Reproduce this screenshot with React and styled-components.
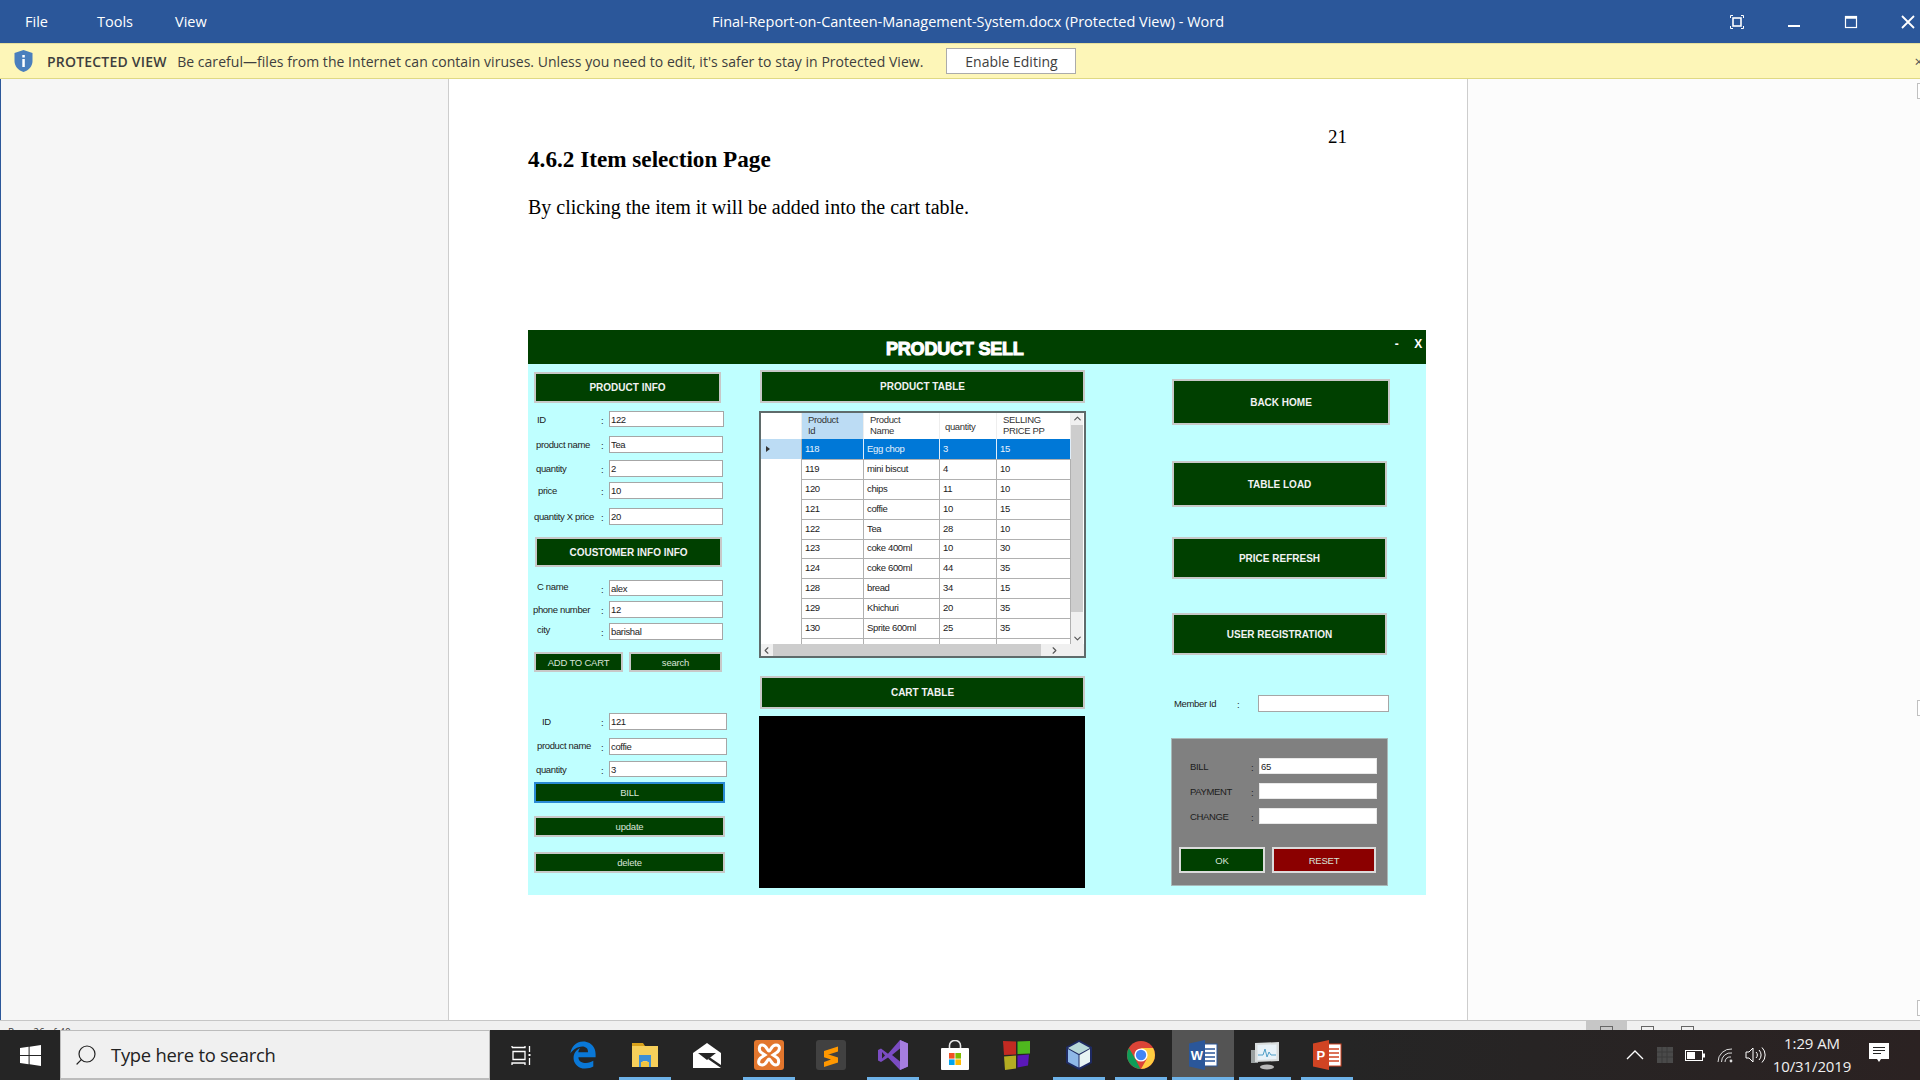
import React from 'react'
import styled, { createGlobalStyle } from 'styled-components'
import { ChevronUp, ChevronDown, ChevronLeft, ChevronRight, Search } from 'lucide-react'
import { FaEdgeLegacy } from 'react-icons/fa6'

const GlobalStyle = createGlobalStyle`
  html, body { margin: 0; padding: 0; overflow: hidden; background: #fff; }
  * { box-sizing: border-box; }
`

const UI_FONT = `"Open Sans", "Noto Sans", sans-serif`
const FORM_FONT = `"Liberation Sans", Arial, sans-serif`

const Screen = styled.div`
  width: 1920px;
  height: 1080px;
  display: flex;
  flex-direction: column;
  overflow: hidden;
`

/* word chrome */
const TitleBar = styled.div`
  height: 43px;
  flex: none;
  background: #2b579a;
  color: #fff;
  display: grid;
  grid-template-columns: 712px 1fr auto;
  align-items: center;
  font: 14.5px ${UI_FONT};
`
const Menu = styled.div`
  display: grid;
  grid-template-columns: 72px 78px auto;
  padding-left: 25px;
`
const DocTitle = styled.div`
  white-space: nowrap;
`
const WinControls = styled.div`
  display: flex;
  gap: 33px;
  align-items: center;
`
const WinIcon = styled.svg`
  width: 24px;
  height: 24px;
  display: block;
`
const ProtectedBar = styled.div`
  height: 36px;
  flex: none;
  background: #fdf6b8;
  border-top: 1px solid #e6df9c;
  border-bottom: 1px solid #dfd984;
  color: #3e3e3e;
  display: flex;
  align-items: center;
  padding-left: 14px;
  font: 14px ${UI_FONT};
  position: relative;
`
const ShieldIcon = styled.svg`
  width: 19px;
  height: 22px;
  margin-right: 14px;
  flex: none;
`
const WarnTitle = styled.span`
  font-weight: 600;
  margin-right: 10.5px;
  letter-spacing: 0.2px;
`
const WarnText = styled.span`
  letter-spacing: 0.04px;
`
const EnableButton = styled.div`
  width: 130px;
  height: 26px;
  margin-left: 23px;
  background: #fff;
  border: 1px solid #ababab;
  display: flex;
  align-items: center;
  justify-content: center;
  font-size: 14px;
`
const BarClose = styled.span`
  position: absolute;
  right: -3px;
  top: 7px;
  font-size: 15px;
  color: #555;
`

const Workspace = styled.div`
  flex: 1;
  min-height: 0;
  display: flex;
`
const LeftGutter = styled.div`
  width: 448px;
  flex: none;
  background: #f6f6f6;
  border-left: 1px solid #2b579a;
`
const RightGutter = styled.div`
  flex: 1;
  background: #fcfcfc;
  position: relative;
`
const ScrollMark = styled.div`
  position: absolute;
  right: 0;
  top: ${p => p.$top}px;
  width: 3px;
  height: 16px;
  border: 1px solid #c0c0c0;
  border-right: 0;
  background: #fff;
`
const Page = styled.div`
  width: 1020px;
  flex: none;
  background: #fff;
  border-left: 1px solid #cdcdcd;
  border-right: 1px solid #cdcdcd;
  padding: 47px 0 0 79px;
  font-family: "Liberation Serif", "Times New Roman", serif;
  color: #000;
`
const PageNumber = styled.div`
  font-size: 19px;
  line-height: 22px;
  margin-left: 800px;
`
const Heading = styled.h2`
  margin: -2px 0 0;
  font-size: 23.2px;
  line-height: 26px;
  font-weight: 700;
`
const BodyText = styled.p`
  margin: 22px 0 0;
  font-size: 20px;
  line-height: 26px;
`

/* the pasted winforms window */
const Form = styled.div`
  width: 898px;
  height: 565px;
  margin-top: 110px;
  background: #bfffff;
  font: 9.5px ${FORM_FONT};
  letter-spacing: -0.35px;
  color: #222;
  display: flex;
  flex-direction: column;
`
const FormHeader = styled.div`
  height: 34px;
  flex: none;
  background: #004000;
  color: #fff;
  display: flex;
  align-items: center;
  padding-left: 358px;
`
const FormTitle = styled.div`
  font: 700 18px ${FORM_FONT};
  letter-spacing: -0.2px;
  -webkit-text-stroke: 1.1px #fff;
  width: 137px;
  white-space: nowrap;
  margin-top: 4px;
`
const FormControls = styled.div`
  margin-left: auto;
  margin-right: 4px;
  margin-top: -7px;
  display: flex;
  gap: 16px;
  font: 700 12px ${FORM_FONT};
`
const FormBody = styled.div`
  flex: 1;
  display: flex;
  padding-left: 5px;
`
const Column = styled.div`
  width: ${p => p.$w}px;
  flex: none;
  display: flex;
  flex-direction: column;
`
const FormButton = styled.div`
  width: ${p => p.$w}px;
  height: ${p => p.$h}px;
  margin-top: ${p => p.$top || 0}px;
  margin-left: ${p => p.$left || 0}px;
  flex: none;
  background: ${p => p.$bg || '#004000'};
  border: 2px solid ${p => (p.$focus ? '#2a8ad4' : p.$light ? '#dcdcdc' : '#c8c8c8')};
  color: ${p => (p.$bold ? '#f2f2f2' : '#d8e4d8')};
  font-weight: ${p => (p.$bold ? 700 : 400)};
  font-size: ${p => (p.$bold ? 10 : 9.5)}px;
  letter-spacing: ${p => (p.$bold ? 0 : -0.2)}px;
  display: flex;
  align-items: center;
  justify-content: center;
  white-space: nowrap;
`
const ButtonRow = styled.div`
  display: flex;
  gap: ${p => p.$gap}px;
  margin-top: ${p => p.$top || 0}px;
  margin-left: ${p => p.$left || 0}px;
`
const FieldRow = styled.div`
  display: flex;
  align-items: center;
  margin-top: ${p => p.$top}px;
  margin-left: ${p => p.$left || 0}px;
`
const FieldLabel = styled.div`
  width: ${p => p.$w || 68}px;
  padding-left: ${p => p.$x || 0}px;
  margin-top: ${p => p.$dy || 0}px;
  white-space: nowrap;
  color: ${p => p.$c || '#222'};
`
const Colon = styled.div`
  width: ${p => p.$w || 8}px;
  margin-top: 2px;
  color: ${p => p.$c || '#222'};
`
const TextBox = styled.input`
  width: ${p => p.$w}px;
  height: ${p => p.$h}px;
  flex: none;
  margin: 0;
  padding: 0 1px;
  border: 1px solid ${p => (p.$flat ? '#e8e8e8' : '#a6a6a6')};
  border-radius: 0;
  background: #fff;
  font: 9.5px ${FORM_FONT};
  letter-spacing: -0.35px;
  color: #222;
  outline: none;
`

const DataGrid = styled.div`
  width: 327px;
  height: 247px;
  margin-top: 8px;
  border: 2px solid #5f6b6b;
  background: #fff;
  display: flex;
  flex-direction: column;
  flex: none;
`
const GridBody = styled.div`
  flex: 1;
  min-height: 0;
  display: flex;
`
const GridRows = styled.div`
  width: 310px;
  overflow: hidden;
`
const GridRow = styled.div`
  display: grid;
  grid-template-columns: 41px 62px 76px 57px 74px;
  height: ${p => (p.$header ? 26 : 19.9)}px;
  background: ${p => (p.$selected ? '#0078d7' : '#fff')};
  color: ${p => (p.$selected ? '#e8f3fc' : '#222')};
`
const GridCell = styled.div`
  padding-left: 3px;
  line-height: 20px;
  border-right: 1px solid ${p => (p.$selected ? '#e0eefa' : '#b0b0b0')};
  border-bottom: 1px solid #b0b0b0;
  white-space: nowrap;
`
const RowHeadCell = styled.div`
  background: ${p => (p.$selected ? '#bcdcf4' : '#fff')};
  border-right: 1px solid #b0b0b0;
  border-bottom: 1px solid #eeeeee;
  display: flex;
  align-items: center;
  padding-left: 5px;
`
const Arrow = styled.div`
  width: 0;
  height: 0;
  border-left: 4px solid #333;
  border-top: 3.5px solid transparent;
  border-bottom: 3.5px solid transparent;
`
const HeadCell = styled.div`
  background: ${p => (p.$active ? '#bcdcf4' : '#fff')};
  padding: ${p => (p.$single ? '8px 0 0 5px' : '1px 0 0 6px')};
  line-height: 11px;
  color: #333;
  border-right: 1px solid #eeeeee;
`
const VScroll = styled.div`
  width: 12px;
  background: #f0f0f0;
  display: flex;
  flex-direction: column;
  align-items: center;
  color: #555;
`
const VThumb = styled.div`
  width: 12px;
  height: 187px;
  margin-top: 1px;
  background: #cdcdcd;
`
const ScrollGap = styled.div`
  flex: 1;
`
const HScroll = styled.div`
  height: 12px;
  flex: none;
  background: #f0f0f0;
  display: flex;
  align-items: center;
  color: #555;
`
const HThumb = styled.div`
  width: 268px;
  height: 12px;
  background: #cdcdcd;
  margin: 0 8px 0 1px;
`
const BlackPanel = styled.div`
  width: 326px;
  height: 172px;
  margin-top: 7px;
  background: #000;
  flex: none;
`
const BillPanel = styled.div`
  width: 217px;
  height: 148px;
  margin-top: 26px;
  background: #808080;
  border: 1px solid #a8b8b8;
  padding-top: 19px;
  flex: none;
`

/* status + taskbar */
const StatusBar = styled.div`
  height: 10px;
  flex: none;
  background: #f0f0f0;
  border-top: 1px solid #c6c6c6;
  overflow: hidden;
  display: flex;
  font: 10px ${UI_FONT};
  color: #444;
  padding-left: 8px;
`
const StatusText = styled.div`
  width: 1578px;
  padding-top: 5px;
  line-height: 12px;
  flex: none;
`
const ViewButton = styled.div`
  width: ${p => p.$w}px;
  height: 9px;
  flex: none;
  background: ${p => (p.$active ? '#c6c6c6' : 'transparent')};
  display: flex;
  justify-content: center;
  padding-top: 5px;
`
const ViewGlyph = styled.div`
  width: 13px;
  height: 8px;
  border: 1px solid #666;
`
const Taskbar = styled.div`
  height: 50px;
  flex: none;
  background: linear-gradient(90deg, #252525 0%, #252525 70%, #2b2222 100%);
  display: flex;
  align-items: stretch;
  color: #fff;
`
const StartButton = styled.div`
  width: 60px;
  flex: none;
  display: flex;
  align-items: center;
  justify-content: center;
`
const SearchBox = styled.div`
  width: 430px;
  flex: none;
  background: #f0f0f0;
  border: 1px solid #bcbcbc;
  border-bottom-width: 2px;
  display: flex;
  align-items: center;
  color: #222;
  padding-left: 13px;
  font: 18.4px ${UI_FONT};
  letter-spacing: -0.25px;
`
const SearchLabel = styled.span`
  margin-left: 13px;
`
const MirroredSearch = styled(Search)`
  transform: scaleX(-1);
`
const TaskSlot = styled.div`
  width: ${p => p.$w || 62}px;
  flex: none;
  position: relative;
  display: flex;
  align-items: center;
  justify-content: center;
  background: ${p => (p.$active ? '#545454' : 'transparent')};
  &::after {
    content: '';
    display: ${p => (p.$open ? 'block' : 'none')};
    position: absolute;
    left: ${p => (p.$active ? 0 : 5)}px;
    right: ${p => (p.$active ? 0 : 5)}px;
    bottom: 0;
    height: 3px;
    background: #6db2e8;
  }
`
const Tray = styled.div`
  margin-left: auto;
  display: flex;
  align-items: center;
  padding-right: 31px;
`
const TrayIcon = styled.div`
  width: 30px;
  display: flex;
  justify-content: center;
`
const Clock = styled.div`
  width: 92px;
  margin-left: -4px;
  text-align: center;
  font: 15px/23px ${UI_FONT};
  letter-spacing: -0.1px;
  color: #f0f0f0;
`
const NoteIcon = styled.div`
  margin-left: 11px;
`
const AppIcon = styled.svg`
  width: 30px;
  height: 30px;
  display: block;
`

const products = [
  ['118', 'Egg chop', '3', '15'],
  ['119', 'mini biscut', '4', '10'],
  ['120', 'chips', '11', '10'],
  ['121', 'coffie', '10', '15'],
  ['122', 'Tea', '28', '10'],
  ['123', 'coke 400ml', '10', '30'],
  ['124', 'coke 600ml', '44', '35'],
  ['128', 'bread', '34', '15'],
  ['129', 'Khichuri', '20', '35'],
  ['130', 'Sprite 600ml', '25', '35'],
  ['', '', '', ''],
]

const Field = ({ label, value, top, x, dy, w = 115, h = 17, left }) => (
  <FieldRow $top={top} $left={left}>
    <FieldLabel $x={x} $dy={dy}>{label}</FieldLabel>
    <Colon>:</Colon>
    <TextBox readOnly value={value} $w={w} $h={h} />
  </FieldRow>
)

const BillField = ({ label, value, top }) => (
  <FieldRow $top={top} $left={18}>
    <FieldLabel $w={61} $c="#1c1c1c">{label}</FieldLabel>
    <Colon $c="#1c1c1c">:</Colon>
    <TextBox readOnly value={value} $w={118} $h={16} $flat />
  </FieldRow>
)

const ProductGrid = () => (
  <DataGrid>
    <GridBody>
      <GridRows>
        <GridRow $header>
          <HeadCell />
          <HeadCell $active>Product<br />Id</HeadCell>
          <HeadCell>Product<br />Name</HeadCell>
          <HeadCell $single>quantity</HeadCell>
          <HeadCell>SELLING<br />PRICE PP</HeadCell>
        </GridRow>
        {products.map((row, i) => (
          <GridRow key={i} $selected={i === 0}>
            <RowHeadCell $selected={i === 0}>{i === 0 && <Arrow />}</RowHeadCell>
            {row.map((cell, j) => (
              <GridCell key={j} $selected={i === 0}>{cell}</GridCell>
            ))}
          </GridRow>
        ))}
      </GridRows>
      <VScroll>
        <ChevronUp size={11} strokeWidth={2.5} />
        <VThumb />
        <ScrollGap />
        <ChevronDown size={11} strokeWidth={2.5} />
      </VScroll>
    </GridBody>
    <HScroll>
      <ChevronLeft size={11} strokeWidth={2.5} />
      <HThumb />
      <ChevronRight size={11} strokeWidth={2.5} />
    </HScroll>
  </DataGrid>
)

const ProductSellForm = () => (
  <Form>
    <FormHeader>
      <FormTitle>PRODUCT SELL</FormTitle>
      <FormControls><span>-</span><span>X</span></FormControls>
    </FormHeader>
    <FormBody>
      <Column $w={226}>
        <FormButton $w={187} $h={31} $top={8} $left={1} $bold>PRODUCT INFO</FormButton>
        <Field label="ID" value="122" top={8} x={4} h={16} />
        <Field label="product name" value="Tea" top={9} x={3} w={114} />
        <Field label="quantity" value="2" top={7} x={3} w={114} />
        <Field label="price" value="10" top={5} x={5} w={114} />
        <Field label="quantity X price" value="20" top={9} x={1} w={114} />
        <FormButton $w={187} $h={30} $top={12} $left={2} $bold>COUSTOMER INFO INFO</FormButton>
        <Field label="C name" value="alex" top={13} x={4} dy={-4} h={16} w={114} />
        <Field label="phone number" value="12" top={5} x={0} w={114} />
        <Field label="city" value="barishal" top={5} x={4} dy={-4} w={114} />
        <ButtonRow $gap={6} $top={12} $left={1}>
          <FormButton $w={89} $h={20}>ADD TO CART</FormButton>
          <FormButton $w={93} $h={20}>search</FormButton>
        </ButtonRow>
        <Field label="ID" value="121" top={41} x={9} w={118} />
        <Field label="product name" value="coffie" top={8} x={4} dy={-3} w={118} />
        <Field label="quantity" value="3" top={6} x={3} w={118} h={16} />
        <FormButton $w={191} $h={21} $top={5} $left={1} $focus>BILL</FormButton>
        <FormButton $w={191} $h={21} $top={13} $left={1}>update</FormButton>
        <FormButton $w={191} $h={21} $top={15} $left={1}>delete</FormButton>
      </Column>
      <Column $w={412}>
        <FormButton $w={325} $h={33} $top={6} $left={1} $bold>PRODUCT TABLE</FormButton>
        <ProductGrid />
        <FormButton $w={325} $h={33} $top={18} $left={1} $bold>CART TABLE</FormButton>
        <BlackPanel />
      </Column>
      <Column $w={220}>
        <FormButton $w={218} $h={46} $top={15} $left={1} $bold>BACK HOME</FormButton>
        <FormButton $w={215} $h={46} $top={36} $left={1} $bold>TABLE LOAD</FormButton>
        <FormButton $w={215} $h={42} $top={30} $left={1} $bold>PRICE REFRESH</FormButton>
        <FormButton $w={215} $h={42} $top={34} $left={1} $bold>USER REGISTRATION</FormButton>
        <FieldRow $top={40} $left={3}>
          <FieldLabel $w={63}>Member Id</FieldLabel>
          <Colon $w={21}>:</Colon>
          <TextBox readOnly value="" $w={131} $h={17} />
        </FieldRow>
        <BillPanel>
          <BillField label="BILL" value="65" top={0} />
          <BillField label="PAYMENT" value="" top={9} />
          <BillField label="CHANGE" value="" top={9} />
          <ButtonRow $gap={7} $top={23} $left={7}>
            <FormButton $w={86} $h={26} $bg="#004000" $light>OK</FormButton>
            <FormButton $w={104} $h={26} $bg="#8b0000" $light>RESET</FormButton>
          </ButtonRow>
        </BillPanel>
      </Column>
    </FormBody>
  </Form>
)

const WindowsLogo = () => (
  <svg width="21" height="21" viewBox="0 0 21 21">
    <path fill="#fff" d="M0 3l8.6-1.2v8.2H0zM9.6 1.7L21 0v10H9.6zM0 11h8.6v8.2L0 18zM9.6 11H21v10L9.6 19.3z" />
  </svg>
)

const TaskViewIcon = () => (
  <svg width="21" height="21" viewBox="0 0 21 21" fill="none" stroke="#fff" strokeWidth="1.3">
    <path d="M1 2.5h13V1M1 2.5V1M2 6.5h12v8H2zM1 20v-2h13v2M18.5 1v6M18.5 13v7" />
    <rect x="17.5" y="9" width="2" height="2" fill="#fff" stroke="none" />
  </svg>
)

const ExplorerIcon = () => (
  <AppIcon viewBox="0 0 30 30">
    <path fill="#d9a21b" d="M2 3h11l2 3H2z" />
    <rect x="2" y="6" width="26" height="21" fill="#f6cf5a" />
    <path fill="#3d8fd6" d="M9 15h12v12h-3.5v-6h-5v6H9z" />
    <rect x="11" y="22" width="8" height="5" fill="#f0c540" />
  </AppIcon>
)

const MailIcon = () => (
  <AppIcon viewBox="0 0 30 30">
    <path fill="#fff" d="M15 3L29 13v15H1V13z" />
    <path fill="#252525" d="M6 13h18l-9 7z" />
    <path fill="#252525" d="M29 28L16 19l2-1.5L29 25z" />
  </AppIcon>
)

const XamppIcon = () => (
  <AppIcon viewBox="0 0 30 30">
    <rect y="0" width="30" height="30" rx="3" fill="#e2762d" />
    <path fill="none" stroke="#fff" strokeWidth="3" d="M8 5c5 0 5 6 7 6s2-6 7-6 4 6 0 8l-3 2 3 2c4 2 3 8 0 8-5 0-5-6-7-6s-2 6-7 6-4-6 0-8l3-2-3-2c-4-2-3-8 0-8z" />
  </AppIcon>
)

const SublimeIcon = () => (
  <AppIcon viewBox="0 0 30 30">
    <rect width="30" height="30" rx="3" fill="#414141" />
    <path fill="#ff9800" d="M22 6.5v5l-14 4.6v-5zM8 13l14 4.5v5L8 27v-5l7-2.5L8 17.2z" />
  </AppIcon>
)

const VsIcon = () => (
  <AppIcon viewBox="0 0 30 30">
    <path fill="#7b4cc2" d="M0 10l3-1.5 7 5.3L22 0l8 3.5v23L22 30 10 17.5 3 22l-3-1.5zM4 12v6.5l3-3zM14 15l8 6.5V8.5z" />
    <path fill="#a67ee0" d="M22 0l8 3.5v23L22 30z" />
  </AppIcon>
)

const StoreIcon = () => (
  <AppIcon viewBox="0 0 30 30">
    <path fill="none" stroke="#e8e8e8" strokeWidth="1.6" d="M9.5 9V5.5a5.5 5 0 0 1 11 0V9" />
    <rect x="1" y="8" width="28" height="22" rx="1" fill="#fff" />
    <rect x="9" y="13" width="5.6" height="5.6" fill="#f25022" />
    <rect x="15.4" y="13" width="5.6" height="5.6" fill="#7fba00" />
    <rect x="9" y="19.4" width="5.6" height="5.6" fill="#00a4ef" />
    <rect x="15.4" y="19.4" width="5.6" height="5.6" fill="#ffb900" />
  </AppIcon>
)

const BlocksIcon = () => (
  <AppIcon viewBox="0 0 30 30">
    <path fill="#c22a22" d="M1 1l13 .5v13L2 15z" />
    <path fill="#4fb81e" d="M15.5 1.5L28 1v12.5L15.5 14z" />
    <path fill="#b3ad22" d="M2 16.5l12-1v13L3 30z" />
    <path fill="#5a18b8" d="M15.5 15.5L27 14.5l-1 11-10.5 2z" />
  </AppIcon>
)

const CubeIcon = () => (
  <AppIcon viewBox="0 0 30 30">
    <path fill="#1e2a62" d="M15 0l13 7v16l-13 7-13-7V7z" />
    <path fill="#b8d8d8" d="M15 2l11 6-11 6L4 8z" />
    <path fill="#8fb8e8" d="M4 9l10.5 6v12.5L4 22z" />
    <path fill="#e8f4f4" d="M26 9l-10.5 6v12.5L26 22z" />
  </AppIcon>
)

const ChromeIcon = () => (
  <AppIcon viewBox="0 0 30 30">
    <circle cx="15" cy="15" r="14" fill="#db4437" />
    <path fill="#0f9d58" d="M15 29A14 14 0 0 1 2.9 8L9 18.5l5.5 10.5z" />
    <path fill="#ffcd40" d="M15 29a14 14 0 0 0 12.1-21H15l6 10.5z" />
    <circle cx="15" cy="15" r="6.6" fill="#fff" />
    <circle cx="15" cy="15" r="5.2" fill="#4285f4" />
  </AppIcon>
)

const OfficeIcon = ({ fill, letter }) => (
  <AppIcon viewBox="0 0 30 30">
    <rect x="14" y="4" width="15" height="22" fill="#fff" stroke={fill} strokeWidth="1" />
    <path stroke={fill} strokeWidth="1.5" d="M17 9h10M17 13h10M17 17h10M17 21h10" />
    <path fill={fill} d="M1 3.5L17 0v30L1 26.5z" />
    <text x="8.8" y="20" textAnchor="middle" fill="#fff" fontSize="13" fontWeight="700" fontFamily="Liberation Sans, sans-serif">{letter}</text>
  </AppIcon>
)

const MonitorIcon = () => (
  <AppIcon viewBox="0 0 30 30">
    <rect x="1" y="10" width="7" height="13" fill="#9aa0a0" />
    <path fill="#d8dcdc" d="M5 3l24-1v19L5 22z" />
    <path fill="#e8f2f8" d="M7.5 5l19-.5V19l-19 1z" />
    <path fill="none" stroke="#4f9fc8" d="M8 15l5 0 2-6 2 8 2-5 2 3h5" />
    <ellipse cx="17" cy="27" rx="7" ry="2.5" fill="#b8b8b8" />
  </AppIcon>
)

const App = () => (
  <Screen>
    <GlobalStyle />
    <TitleBar>
      <Menu><span>File</span><span>Tools</span><span>View</span></Menu>
      <DocTitle>Final-Report-on-Canteen-Management-System.docx (Protected View) - Word</DocTitle>
      <WinControls>
        <WinIcon viewBox="0 0 24 24" fill="none" stroke="#fff">
          <rect x="8" y="8" width="8" height="8" strokeWidth="1.6" />
          <path strokeWidth="1" d="M8 5.500H5.500V8M16 5.500h2.500V8M8 18.500H5.500V16M16 18.500h2.500V16" />
        </WinIcon>
        <WinIcon viewBox="0 0 24 24" fill="none" stroke="#fff"><path strokeWidth="2" d="M6 16h12" /></WinIcon>
        <WinIcon viewBox="0 0 24 24" fill="none" stroke="#fff">
          <rect x="6.500" y="6.500" width="11" height="11" strokeWidth="1.2" />
          <path strokeWidth="2.500" d="M6.500 7.500h11" />
        </WinIcon>
        <WinIcon viewBox="0 0 24 24" fill="none" stroke="#fff"><path strokeWidth="1.800" d="M6 6l12 12M18 6L6 18" /></WinIcon>
      </WinControls>
    </TitleBar>
    <ProtectedBar>
      <ShieldIcon viewBox="0 0 19 22">
        <path fill="#4a7fbd" d="M9.500 0l9 3v8c0 5.500-4 9.500-9 11-5-1.500-9-5.500-9-11V3z" />
        <rect x="8.300" y="9" width="2.500" height="8" fill="#fff" />
        <rect x="8.300" y="5" width="2.500" height="2.500" fill="#fff" />
      </ShieldIcon>
      <WarnTitle>PROTECTED VIEW</WarnTitle>
      <WarnText>Be careful—files from the Internet can contain viruses. Unless you need to edit, it's safer to stay in Protected View.</WarnText>
      <EnableButton>Enable Editing</EnableButton>
      <BarClose>×</BarClose>
    </ProtectedBar>
    <Workspace>
      <LeftGutter />
      <Page>
        <PageNumber>21</PageNumber>
        <Heading>4.6.2 Item selection Page</Heading>
        <BodyText>By clicking the item it will be added into the cart table.</BodyText>
        <ProductSellForm />
      </Page>
      <RightGutter>
        <ScrollMark $top={4} />
        <ScrollMark $top={621} />
        <ScrollMark $top={921} />
      </RightGutter>
    </Workspace>
    <StatusBar>
      <StatusText>Page 26 of 40</StatusText>
      <ViewButton $w={41} $active><ViewGlyph /></ViewButton>
      <ViewButton $w={40}><ViewGlyph /></ViewButton>
      <ViewButton $w={40}><ViewGlyph /></ViewButton>
    </StatusBar>
    <Taskbar>
      <StartButton><WindowsLogo /></StartButton>
      <SearchBox>
        <MirroredSearch size={24} strokeWidth={1.2} />
        <SearchLabel>Type here to search</SearchLabel>
      </SearchBox>
      <TaskSlot><TaskViewIcon /></TaskSlot>
      <TaskSlot><FaEdgeLegacy size={28} color="#0a78d7" /></TaskSlot>
      <TaskSlot $open><ExplorerIcon /></TaskSlot>
      <TaskSlot><MailIcon /></TaskSlot>
      <TaskSlot $open><XamppIcon /></TaskSlot>
      <TaskSlot><SublimeIcon /></TaskSlot>
      <TaskSlot $open><VsIcon /></TaskSlot>
      <TaskSlot><StoreIcon /></TaskSlot>
      <TaskSlot><BlocksIcon /></TaskSlot>
      <TaskSlot $open><CubeIcon /></TaskSlot>
      <TaskSlot $open><ChromeIcon /></TaskSlot>
      <TaskSlot $open $active><OfficeIcon fill="#2b579a" letter="W" /></TaskSlot>
      <TaskSlot $open><MonitorIcon /></TaskSlot>
      <TaskSlot $open><OfficeIcon fill="#d04423" letter="P" /></TaskSlot>
      <Tray>
        <TrayIcon>
          <svg width="18" height="10" viewBox="0 0 18 10" fill="none" stroke="#fff" strokeWidth="1.300"><path d="M1 9l8-8 8 8" /></svg>
        </TrayIcon>
        <TrayIcon>
          <svg width="16" height="16" viewBox="0 0 16 16"><rect width="16" height="16" fill="#4a4a4a" /><path stroke="#3a3a3a" d="M0 5h16M0 10h16M5 0v16M10 0v16" /></svg>
        </TrayIcon>
        <TrayIcon>
          <svg width="20" height="11" viewBox="0 0 20 11"><rect x=".5" y=".5" width="17" height="10" fill="none" stroke="#fff" /><rect x="2" y="2" width="8" height="7" fill="#fff" /><rect x="18" y="3.500" width="2" height="4" fill="#fff" /></svg>
        </TrayIcon>
        <TrayIcon>
          <svg width="17" height="15" viewBox="0 0 17 15" fill="none" stroke="#ddd"><path d="M1 14A13 13 0 0 1 15 1M4.500 14A9 9 0 0 1 15 5M8 14a5 5 0 0 1 6-5" /><circle cx="14" cy="13" r="1.400" fill="#ddd" stroke="none" /></svg>
        </TrayIcon>
        <TrayIcon>
          <svg width="21" height="18" viewBox="0 0 21 18" fill="none" stroke="#fff"><path d="M1 6h3l4-4v14l-4-4H1zM11 6a4 4 0 0 1 0 6M14 4a7 7 0 0 1 0 10M17 1.500a10.500 10.500 0 0 1 0 15" /></svg>
        </TrayIcon>
        <Clock>1:29 AM<br />10/31/2019</Clock>
        <NoteIcon>
          <svg width="20" height="20" viewBox="0 0 20 20"><path fill="#fff" d="M0 0h20v16h-8l-2 3-2-3H0z" /><path stroke="#252525" d="M4 4.500h12M4 7.500h12M4 10.500h8" /></svg>
        </NoteIcon>
      </Tray>
    </Taskbar>
  </Screen>
)

export default App
